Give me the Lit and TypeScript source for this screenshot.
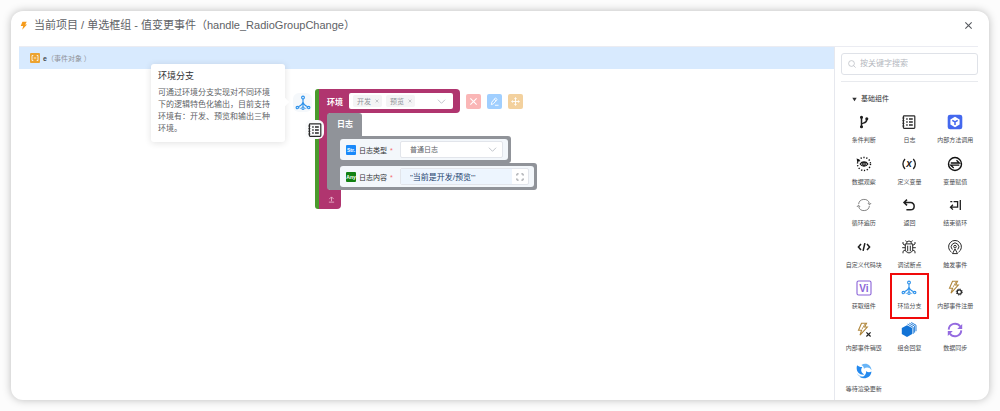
import { LitElement, html, css, TemplateResult } from "lit";
import { customElement } from "lit/decorators.js";
import { classMap } from "lit/directives/class-map.js";

const icons: Record<string, TemplateResult> = {
  branch: html`<svg viewBox="0 0 16 16" fill="none" stroke="#1f1f1f" stroke-width="1.5"><path d="M5.5 3.5v9M5.5 10.5c0-2 5.3-.6 5.3-5"/><circle cx="5.5" cy="3.2" r=".8" fill="#1f1f1f"/><circle cx="5.5" cy="12.8" r=".8" fill="#1f1f1f"/><circle cx="10.8" cy="4.8" r=".8" fill="#1f1f1f"/></svg>`,
  log: html`<svg viewBox="0 0 16 16" fill="none" stroke="#2a2a2a" stroke-width="1.2"><rect x="2.4" y="1.8" width="11.4" height="12.6" rx=".8"/><path d="M1.4 4h2M1.4 6.7h2M1.4 9.3h2M1.4 12h2" stroke-width="1"/><path d="M5.2 5h1.500M5.200 8h1.500M5.200 11h1.500M8 5h3.800M8 8h3.800M8 11h3.800" stroke-width="1.300"/></svg>`,
  method: html`<svg viewBox="0 0 16 16"><rect x=".7" y=".7" width="14.6" height="14.6" rx="2.4" fill="#4468ee"/><path d="M8 2.800l4.600 2.600v5.200L8 13.200l-4.600-2.600V5.400z" fill="#fff"/><path d="M5.300 6.300L8 7.900l2.700-1.600M8 7.900v3.200" fill="none" stroke="#4468ee" stroke-width="1.500"/></svg>`,
  watch: html`<svg viewBox="0 0 16 16" fill="none" stroke="#111"><circle cx="8" cy="8" r="6.500" stroke-width="1.400" stroke-dasharray="1.300 1.620"/><path d="M.7 2.300l.4 3.700 3.500-1z" fill="#111" stroke="none"/><path d="M4.200 8c1.800-2.900 5.800-2.900 7.600 0-1.800 2.900-5.800 2.900-7.600 0z" stroke-width="1.300"/><circle cx="8" cy="8" r="1.300" stroke-width="1.200"/></svg>`,
  variable: html`<svg viewBox="0 0 16 16" fill="none" stroke="#1f1f1f" stroke-width="1.300"><path d="M4 3C1.500 6 1.500 10 4 13M12.300 3c2.500 3 2.500 7 0 10"/><text x="8.100" y="11" text-anchor="middle" font-family="Liberation Sans, sans-serif" font-weight="700" font-style="italic" font-size="10" fill="#1f1f1f" stroke="none">x</text></svg>`,
  assign: html`<svg viewBox="0 0 16 16" fill="none" stroke="#111"><circle cx="8" cy="8" r="6.500" stroke-width="1.400"/><path d="M3.800 7h8.600L9.500 4.200M12.300 9.200H3.800l2.900 2.700" stroke-width="1.300"/></svg>`,
  loop: html`<svg viewBox="0 0 16 16" fill="none" stroke="#777" stroke-width=".9"><path d="M2.600 7.200a5.500 5.500 0 0 1 10.800-.6M13.400 8.800a5.500 5.500 0 0 1-10.800.6M11.900 6l1.600 1.900L15.100 6M.9 10l1.600-1.900L4.100 10"/></svg>`,
  back: html`<svg viewBox="0 0 16 16" fill="none" stroke="#1f1f1f" stroke-width="1.500"><path d="M6 2.600L3 5.500l3 2.900M3.200 5.500h6.300c5 0 4.800 7.300 0 7.300H5.400"/></svg>`,
  end: html`<svg viewBox="0 0 16 16" fill="none" stroke="#1f1f1f" stroke-width="1.300"><path d="M3.300 4.600h2M6.600 4.600h4v5.600H3.600M5.900 7.800l-2.400 2.400 2.400 2.400M13.300 3v10"/></svg>`,
  code: html`<svg viewBox="0 0 16 16" fill="none" stroke="#1f1f1f" stroke-width="1.500"><path d="M5 5L2.400 8 5 11M11 5l2.600 3L11 11M8.900 4.200L7.100 11.800"/></svg>`,
  bug: html`<svg viewBox="0 0 16 16" fill="none" stroke="#2a2a2a" stroke-width="1"><path d="M5.500 4.700a2.500 2.700 0 0 1 5 0M4.300 4.900h7.400v5.300c0 4.900-7.400 4.900-7.400 0zM6.700 6.700v5.600M9.300 6.700v5.600M4.300 6.400L2 5V3M11.700 6.400L14 5V3M1.200 8.700h3.100M11.700 8.700h3.100M4.300 10.900L2 12.300v2M11.700 10.900l2.300 1.400v2M5.500 2.800L4.600 1.500M10.500 2.800l.9-1.300"/></svg>`,
  trigger: html`<svg viewBox="0 0 16 16" fill="none" stroke="#2a2a2a" stroke-width="1"><path d="M4.500 13.200a6.400 6.400 0 1 1 7 0M5.300 10.500a3.800 3.800 0 1 1 5.400 0"/><circle cx="8" cy="7.600" r="1.300"/><path d="M8 9.900l2.500 4.700h-5z"/></svg>`,
  vi: html`<svg viewBox="0 0 16 16"><rect x="1" y="1" width="14" height="14" rx="1.500" fill="#fff" stroke="#8a63d8" stroke-width="1.100"/><text x="8" y="11.600" text-anchor="middle" font-family="Liberation Sans, sans-serif" font-weight="700" font-size="10" fill="#8a63d8">Vi</text></svg>`,
  env: html`<svg viewBox="0 0 16 16" fill="none" stroke="#2b90ea" stroke-width="1.100"><circle cx="8" cy="2.500" r="1.400"/><path d="M8 4v8M8 6.800C7.600 9.400 6 10.500 3.300 11.800M8 6.800c.4 2.600 2 3.700 4.700 5"/><circle cx="2.300" cy="12.600" r="1.200"/><circle cx="8" cy="13.200" r="1.200"/><circle cx="13.700" cy="12.600" r="1.200"/><path d="M4.600 12.500l.9 1.400M11.400 12.500l-.9 1.400" stroke-width=".8"/></svg>`,
  register: html`<svg viewBox="0 0 16 16" fill="none"><path d="M5.500 1.200h5L8.600 5h2.700L4 13.200l1.600-5H2.500z" stroke="#b0873c" stroke-width="1.100"/><path d="M9.200 1.500L6 7.200" stroke="#b0873c" stroke-width=".8"/><circle cx="12.300" cy="12" r="2.100" stroke="#222" stroke-width="1.200"/><circle cx="12.300" cy="12" r="3" stroke="#222" stroke-width="1" stroke-dasharray="1.200 1.156"/></svg>`,
  destroy: html`<svg viewBox="0 0 16 16" fill="none"><path d="M5.500 1.200h5L8.600 5h2.700L4 13.200l1.600-5H2.500z" stroke="#b0873c" stroke-width="1.100"/><path d="M9.200 1.500L6 7.200" stroke="#b0873c" stroke-width=".8"/><path d="M10.400 10.300l4.200 4.200M14.600 10.300l-4.200 4.200" stroke="#222" stroke-width="1.200"/></svg>`,
  group: html`<svg viewBox="0 0 16 16"><path d="M6 3.200l5.200 2.900v6L6 15 .8 12.100v-6z" fill="#1273d6"/><path d="M6.500 2.100l5.700 3.200v6.500M8.300 1.200l5.300 2.900v6.500M10.200.5L15 3.200v6" fill="none" stroke="#1273d6" stroke-width=".9"/></svg>`,
  sync: html`<svg viewBox="0 0 16 16" fill="none" stroke="#946ae0" stroke-width="1.900"><path d="M1.700 7.600a6.300 6.300 0 0 1 11.500-3.100M14.300 8.400a6.300 6.300 0 0 1-11.500 3.100"/><path d="M15.200 2v5h-5zM.8 14V9h5z" fill="#946ae0" stroke="none"/></svg>`,
  render: html`<svg viewBox="0 0 16 16"><path d="M1.100 2.200C-.6 7.500 2.700 12.300 8.300 11.600 4.800 9.800 4.400 6.400 6.300 3.900 4.600 4.200 2.600 3.500 1.100 2.200z" fill="#2489ee"/><path d="M5.400 1.900C9.800-.9 15.200 1.700 15.500 7.200c-2.100-3.200-5.100-3.200-7.600-1.500C8 3.900 7 2.700 5.400 1.900z" fill="#69b5f7"/><path d="M15.400 8.500c-.1 5.500-6.400 8.600-11.500 5.700 4.300-.2 6.400-2.700 6.300-6.200 1.400 1.400 3.400 1.500 5.200.5z" fill="#2489ee"/><path d="M.9 9.800c1.200 2.700 4.200 4.200 7.500 3.400-2 2.200-6.200 1-7.500-3.400z" fill="#69b5f7"/></svg>`,
};

const cross = html`<svg viewBox="0 0 10 10" fill="none" stroke="currentColor" stroke-width="1.200"><path d="M1.500 1.500l7 7M8.500 1.500l-7 7"/></svg>`;
const chevron = html`<svg class="chevron" viewBox="0 0 10 10" fill="none" stroke="#b4b8c0" stroke-width=".9"><path d="M1 3l4 4 4-4"/></svg>`;

const components: [string, string][] = [
  ["branch", "条件判断"], ["log", "日志"], ["method", "内部方法调用"],
  ["watch", "数据观察"], ["variable", "定义变量"], ["assign", "变量赋值"],
  ["loop", "循环遍历"], ["back", "返回"], ["end", "结束循环"],
  ["code", "自定义代码块"], ["bug", "调试断点"], ["trigger", "触发事件"],
  ["vi", "获取组件"], ["env", "环境分支"], ["register", "内部事件注册"],
  ["destroy", "内部事件销毁"], ["group", "组合回复"], ["sync", "数据同步"],
  ["render", "等待渲染更新"],
];

const base = css`
  * { box-sizing: border-box; }
  svg { display: block; }
  button, input, select { font: inherit; color: inherit; margin: 0; padding: 0; border: 0; background: none; outline: none; }
  button { cursor: pointer; }
`;

@customElement("component-palette")
export class ComponentPalette extends LitElement {
  static styles = [base, css`
    :host { display: flex; flex-direction: column; padding: 6px 11px 0 6px; color: #303133; }
    .search { display: flex; align-items: center; gap: 4px; height: 22px; padding: 0 6px; border: 1px solid #dfe2e8; border-radius: 3px; }
    .search svg { width: 8px; height: 8px; flex: none; }
    .search input { flex: 1; min-width: 0; font-size: 8px; line-height: 12px; }
    .search input::placeholder { color: #b4b7be; opacity: 1; }
    .rule { height: 1px; margin-top: 6px; background: #e8eaee; }
    .group { display: flex; align-items: center; gap: 4px; margin-top: 11px; padding-left: 11px; font-size: 7px; line-height: 12px; }
    .group svg { width: 5px; height: 5px; }
    .grid { flex: 1; display: grid; grid-template-columns: repeat(3, 1fr); grid-template-rows: repeat(7, 1fr); margin-top: 4px; }
    .item { position: relative; display: flex; flex-direction: column; align-items: center; gap: 6px; padding-top: 5px; font-size: 6px; line-height: 8px; white-space: nowrap; color: #4a4c50; }
    .item svg { width: 16px; height: 16px; }
    .marked::after { content: ""; position: absolute; inset: -2px 3px; border: 2px solid #f00a0a; }
  `];

  render() {
    return html`
      <label class="search">
        <svg viewBox="0 0 8 8" fill="none" stroke="#b4b7be" stroke-width=".7"><circle cx="3.500" cy="3.500" r="2.900"/><path d="M5.600 5.600l2 2"/></svg>
        <input type="text" placeholder="按关键字搜索" aria-label="按关键字搜索" />
      </label>
      <div class="rule"></div>
      <button class="group"><svg viewBox="0 0 6 6"><path d="M.3 1h5.400L3 5z" fill="#303133"/></svg>基础组件</button>
      <div class="grid">
        ${components.map(([icon, label]) => html`
          <button class=${classMap({ item: true, marked: icon === "env" })}>${icons[icon]}<span>${label}</span></button>`)}
      </div>`;
  }
}

@customElement("logic-block")
export class LogicBlock extends LitElement {
  static styles = [base, css`
    :host { display: block; }
    .block { position: relative; border-left: 4px solid #4a9a2c; border-radius: 3px; }
    .head { display: flex; align-items: center; gap: 6px; height: 24px; width: 141px; padding: 0 7px 0 8px; border-radius: 0 4px 4px 0; background: #b0356f; color: #fff; font-size: 8px; font-weight: 700; white-space: nowrap; }
    .tags { flex: 1; display: flex; align-items: center; gap: 4px; height: 16px; padding: 0 7px 0 4px; border-radius: 2px; background: #fff; color: #909399; font-size: 7px; font-weight: 400; }
    .tag { display: flex; align-items: center; gap: 4px; height: 12px; padding: 0 3px 0 4px; border-radius: 2px; background: #f4f4f5; }
    .tag svg { width: 4px; height: 4px; }
    .chevron { width: 9px; height: 9px; }
    .tags .chevron { margin-left: auto; }
    .actions { display: flex; gap: 6px; }
    .actions button { width: 15px; height: 15px; padding: 3px; border-radius: 2px; color: #fff; }
    .actions svg { width: 9px; height: 9px; }
    .remove { background: #fab6b6; }
    .edit { background: #a0cfff; }
    .move { background: #f3d19e; }
    .body { padding-left: 8px; background: linear-gradient(#b0356f, #b0356f) left / 10px 100% no-repeat; }
    .name { width: 35px; height: 23px; padding-left: 10px; border-radius: 3px 3px 0 0; background: #909399; color: #fff; font-size: 8px; line-height: 23px; font-weight: 700; }
    .row { width: max-content; padding: 3px 3px 3px 13px; background: #909399; border-radius: 0 3px 3px 0; }
    .row:last-child { border-bottom-left-radius: 3px; }
    .field { display: flex; align-items: center; height: 21px; padding: 0 5px 0 6px; border-radius: 3px; background: #f3f7fb; }
    .type { width: 10px; height: 10px; margin-right: 3px; border-radius: 1px; background: #1989fa; color: #fff; font-size: 5px; line-height: 10px; text-align: center; font-weight: 700; }
    .any { background: #118011; }
    .field label { width: 41px; font-size: 7px; color: #303133; white-space: nowrap; }
    .star { margin-left: 3px; color: #f56c6c; }
    .select { position: relative; width: 103px; height: 17px; border: 1px solid #e2e5eb; border-radius: 2px; background: #fff; }
    .select select { display: block; width: 100%; height: 15px; padding-left: 9px; appearance: none; font-size: 7px; line-height: 15px; color: #606266; }
    .select .chevron { position: absolute; right: 5px; top: 3px; pointer-events: none; }
    .expr { display: flex; align-items: center; width: 129px; height: 17px; border: 1px solid #e2e5eb; border-radius: 2px; background: #fff; overflow: hidden; }
    .expr input { flex: 1; min-width: 0; height: 100%; padding-left: 9px; background: #edf5fe; color: #22406c; font-size: 8px; }
    .expr button { padding: 0 4px; }
    .expr svg { width: 8px; height: 8px; }
    .foot { display: grid; place-items: center; width: 22px; height: 19px; border-radius: 0 0 4px 0; background: #b0356f; }
    .foot svg { width: 7px; height: 7px; margin-left: 2px; }
    .head-line { display: flex; align-items: center; gap: 6px; }
    .badge { position: absolute; display: grid; place-items: center; width: 19px; height: 19px; border-radius: 6px; background: #f5f8fb; }
    .badge svg { width: 16px; height: 16px; }
    .env { left: -26px; top: 4px; }
    .log { left: -14px; top: 31px; background: #fafbfc; }
  `];

  render() {
    return html`
      <div class="block">
        <div class="head-line">
          <div class="head">
            <span>环境</span>
            <div class="tags">
              <span class="tag">开发<button aria-label="移除开发">${cross}</button></span>
              <span class="tag">预览<button aria-label="移除预览">${cross}</button></span>
              ${chevron}
            </div>
          </div>
          <div class="actions">
            <button class="remove" aria-label="删除">${cross}</button>
            <button class="edit" aria-label="编辑"><svg viewBox="0 0 10 10" fill="none" stroke="#fff" stroke-width="1"><path d="M1.500 8.500l.5-2.800L6 1l2 1.800-4.200 4.700zM5.500 9.200h4M4.800 2.600l2 1.700"/></svg></button>
            <button class="move" aria-label="移动"><svg viewBox="0 0 10 10" fill="none" stroke="#fff" stroke-width="1"><path d="M5 1v8M1 5h8M3.700 1.900L5 .7l1.300 1.200M3.700 8.100L5 9.300l1.300-1.200M1.900 3.700L.7 5l1.200 1.300M8.100 3.700L9.300 5 8.100 6.300"/></svg></button>
          </div>
        </div>
        <div class="body">
          <div class="name">日志</div>
          <div class="row">
            <div class="field">
              <span class="type">Str.</span>
              <label for="kind">日志类型<span class="star">*</span></label>
              <div class="select"><select id="kind"><option>普通日志</option></select>${chevron}</div>
            </div>
          </div>
          <div class="row">
            <div class="field">
              <span class="type any">Any</span>
              <label for="content">日志内容<span class="star">*</span></label>
              <div class="expr">
                <input id="content" type="text" .value=${'"当前是开发/预览"\''} />
                <button aria-label="展开"><svg viewBox="0 0 9 9" fill="none" stroke="#8a8d93" stroke-width="1"><path d="M1 3V1h2M6 1h2v2M8 6v2H6M3 8H1V6"/></svg></button>
              </div>
            </div>
          </div>
        </div>
        <div class="foot"><svg viewBox="0 0 8 8" fill="none" stroke="#eebfd4" stroke-width=".9"><path d="M4 6V1.200M1.500 3.500L4 1l2.500 2.500M1 7h6"/></svg></div>
        <span class="badge env">${icons.env}</span>
        <span class="badge log">${icons.log}</span>
      </div>`;
  }
}

@customElement("app-root")
export class AppRoot extends LitElement {
  static styles = [base, css`
    :host { display: flex; box-sizing: border-box; padding: 11px; min-height: 100vh; background: #fcfcfc; font-family: "Liberation Sans", "Noto Sans CJK SC", sans-serif; }
    .window { flex: 1; display: flex; flex-direction: column; border-radius: 12px; background: #fff; box-shadow: 0 0 9px rgba(0, 0, 0, .26); }
    .header { display: flex; align-items: center; gap: 6px; height: 36px; margin: 0 11px 0 8px; padding: 0 5px 7px 0; border-bottom: 1px solid #ebecf2; }
    .bolt { width: 9px; height: 9px; }
    .header h1 { flex: 1; margin: 0; font-size: 11px; line-height: 16px; font-weight: 400; color: #606266; }
    .close { color: #55585e; }
    .close svg { width: 9px; height: 9px; }
    .main { flex: 1; display: grid; grid-template-columns: minmax(0, 1fr) 155px; }
    .canvas { position: relative; margin-left: 8px; }
    .param { display: flex; align-items: center; gap: 3px; height: 22px; padding-left: 11px; background: #d8eafe; font-size: 7px; color: #909399; }
    .param b { color: #44474d; }
    .param svg { width: 10px; height: 10px; }
    .palette { border-left: 1px solid #e6e8ee; }
    .tip { position: absolute; left: 132px; top: 17px; width: 134px; padding: 6px 7px 7px; border-radius: 3px; background: #fff; box-shadow: 0 1px 7px rgba(0, 0, 0, .12); color: #606266; font-size: 8px; line-height: 12px; }
    .tip::after { content: ""; position: absolute; left: 131px; top: 35px; width: 6px; height: 6px; background: #fff; rotate: 45deg; }
    .tip h2 { margin: 0 0 5px; font-size: 9px; line-height: 12px; font-weight: 400; color: #303133; }
    .tip p { margin: 0; white-space: nowrap; }
    .flow { position: absolute; left: 296px; top: 42px; }
  `];

  render() {
    return html`
      <div class="window">
        <header class="header">
          <svg class="bolt" viewBox="0 0 10 10"><path d="M3.800.8h4.800L6.900 4h2L3.600 9.600l1-4H1.900z" fill="#f59b1b"/></svg>
          <h1>当前项目 / 单选框组 - 值变更事件（handle_RadioGroupChange）</h1>
          <button class="close" aria-label="关闭">${cross}</button>
        </header>
        <div class="main">
          <section class="canvas">
            <div class="param">
              <svg viewBox="0 0 10 10"><rect width="10" height="10" rx="1" fill="#eca330"/><path d="M3.300 2.500H2v5h1.300M6.700 2.500H8v5H6.700M3.800 5h2.400" fill="none" stroke="#fff" stroke-width=".8"/></svg>
              <span><b>e</b>（事件对象 ）</span>
            </div>
            <logic-block class="flow"></logic-block>
            <div class="tip" role="tooltip">
              <h2>环境分支</h2>
              <p>可通过环境分支实现对不同环境<br />下的逻辑特色化输出，目前支持<br />环境有：开发、预览和输出三种<br />环境。</p>
            </div>
          </section>
          <component-palette class="palette"></component-palette>
        </div>
      </div>`;
  }
}
